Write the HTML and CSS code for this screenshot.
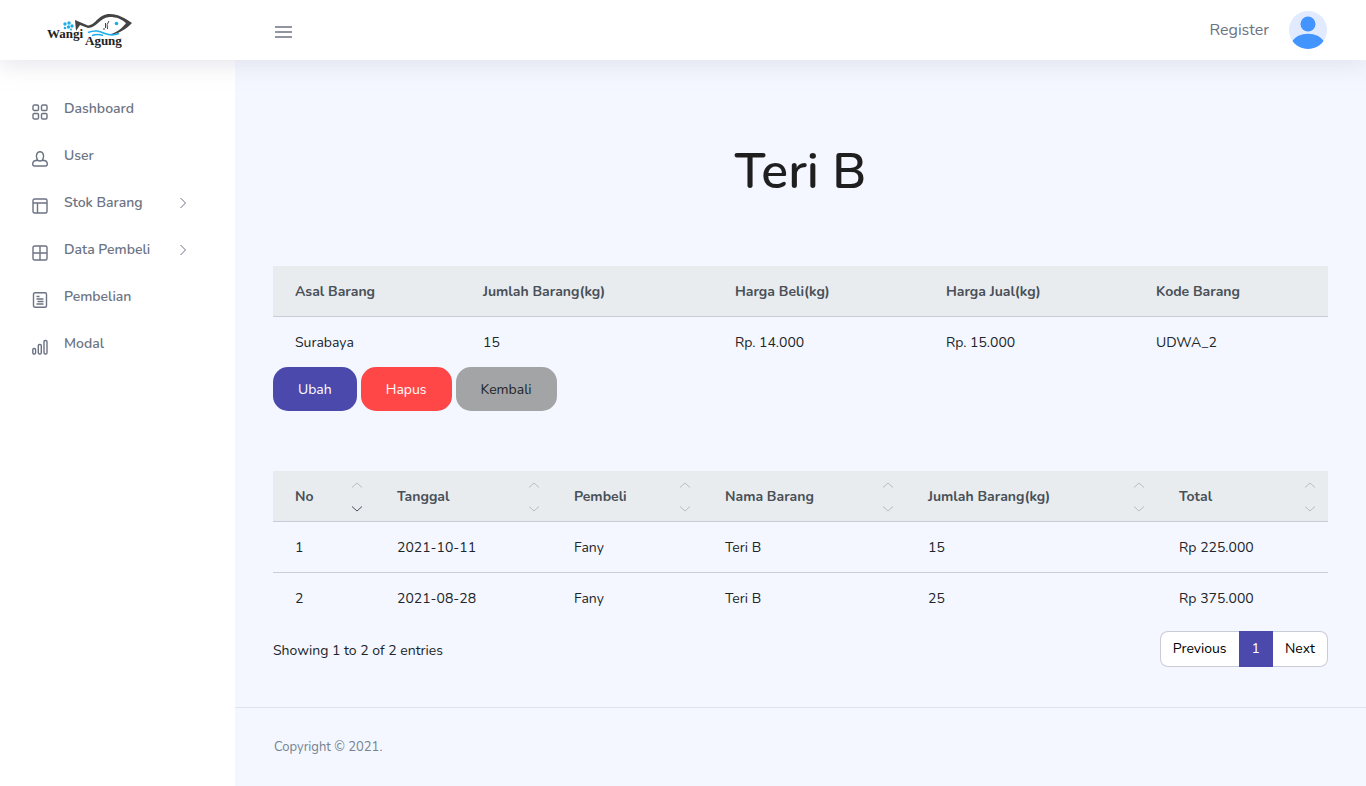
FILE: index.html
```html
<!DOCTYPE html>
<html lang="id">
<head>
<meta charset="utf-8">
<meta name="viewport" content="width=device-width, initial-scale=1">
<title>Teri B - Wangi Agung</title>
<link rel="stylesheet" href="styles.css">
</head>
<body>
<svg class="sprite" aria-hidden="true">
  <symbol id="sort-up" viewBox="0 0 12 6"><path d="M1 5.500 6 1l5 4.500"/></symbol>
  <symbol id="sort-down" viewBox="0 0 12 6"><path d="M1 .5 6 5l5-4.500"/></symbol>
  <symbol id="chevron" viewBox="0 0 8 12"><path d="m1.500 1 5 5-5 5"/></symbol>
</svg>
<header class="navbar">
  <a class="brand" href="#" aria-label="Wangi Agung">
    <svg class="logo" viewBox="0 0 86 36">
      <path class="fish" d="M28 8 41 13.500C49 13 51 2 63 2c8 0 15 4 22 9-6 6-12 10-21 12l-1-.8c7-2 12-6 16-11C75 7 69 5 63 5 53 5 50 16 41 16l-8-3-4 6z"/>
      <path class="fin" d="M62 9q-3 3-1.500 8M58.500 11v5m-2.500 1h2"/>
      <circle class="aqua" cx="69.500" cy="11.500" r="1.800"/>
      <path class="wave" d="M41 20.500c8-3 12-1 17 1s9 2 14 0M45 23.500q6-2 11 0"/>
      <g class="aqua"><circle cx="18" cy="12" r="1.700"/><circle cx="22" cy="11" r="1.700"/><circle cx="25" cy="14" r="1.700"/><circle cx="18" cy="16" r="1.300"/><circle cx="21.500" cy="15" r="1.700"/><circle cx="24" cy="17.500" r="1"/></g>
      <text x="0" y="26">Wangi</text>
      <text x="38" y="33">Agung</text>
    </svg>
  </a>
  <button class="toggle" type="button" aria-label="Menu"><svg viewBox="0 0 18 14"><path d="M1 2h17M1 7h17M1 12h17"/></svg></button>
  <nav class="account">
    <a class="register" href="#">Register</a>
    <a class="profile" href="#" aria-label="Profil">
      <svg viewBox="0 0 38 38"><defs><clipPath id="round"><circle cx="19" cy="19" r="19"/></clipPath></defs><g clip-path="url(#round)"><path fill="#e1eaff" d="M0 0h38v38H0z"/><circle cx="19" cy="13" r="7.500" fill="#4294ff"/><path d="M3 31c5-11 27-11 32 0l-4 7H7z" fill="#4294ff"/></g></svg>
    </a>
  </nav>
</header>
<div class="layout">
  <nav class="sidebar">
    <a class="item" href="#"><svg class="icon" viewBox="0 0 16 16"><rect x="1" y="1" width="5.500" height="5.500" rx="1.300"/><rect x="9.500" y="1" width="5.500" height="5.500" rx="1.300"/><rect x="1" y="9.500" width="5.500" height="5.500" rx="1.300"/><rect x="9.500" y="9.500" width="5.500" height="5.500" rx="1.300"/></svg><span>Dashboard</span></a>
    <a class="item" href="#"><svg class="icon" viewBox="0 0 16 16"><path d="M5.800 9.300C3.500 6 4.200.8 8 .8s4.500 5.200 2.200 8.500M5.800 9.300C3 9.300.7 10.500.7 13c0 1.500.5 2 1.800 2h11c1.300 0 1.800-.5 1.800-2 0-2.500-2.300-3.700-5.100-3.700-1 .9-3.400.9-4.400 0z"/></svg><span>User</span></a>
    <a class="item" href="#"><svg class="icon" viewBox="0 0 16 16"><rect x="1" y="1" width="14" height="14" rx="1.500"/><path d="M1 5h14M5.500 5v10"/></svg><span>Stok Barang</span><svg class="chevron"><use href="#chevron"/></svg></a>
    <a class="item" href="#"><svg class="icon" viewBox="0 0 16 16"><rect x="1" y="1" width="14" height="14" rx="1.500"/><path d="M8 1v14M1 8h14"/></svg><span>Data Pembeli</span><svg class="chevron"><use href="#chevron"/></svg></a>
    <a class="item" href="#"><svg class="icon" viewBox="0 0 16 16"><rect x="1.500" y=".7" width="13" height="14.600" rx="1.500"/><path d="M4.500 4.500h3M4.500 7h7M5.500 9.500h6M4.500 12h7"/></svg><span>Pembelian</span></a>
    <a class="item" href="#"><svg class="icon" viewBox="0 0 16 16"><rect x=".8" y="9.500" width="2.800" height="5.500" rx="1.200"/><rect x="6.300" y="5.500" width="3" height="9.500" rx="1.200"/><rect x="12" y="1.500" width="3" height="13.500" rx="1.200"/></svg><span>Modal</span></a>
  </nav>
  <div class="page">
    <main class="content">
      <h1>Teri B</h1>
      <table class="table">
        <colgroup><col class="w188"><col class="w252"><col class="w211"><col class="w210"><col class="w194"></colgroup>
        <thead><tr><th>Asal Barang</th><th>Jumlah Barang(kg)</th><th>Harga Beli(kg)</th><th>Harga Jual(kg)</th><th>Kode Barang</th></tr></thead>
        <tbody><tr><td>Surabaya</td><td>15</td><td>Rp. 14.000</td><td>Rp. 15.000</td><td>UDWA_2</td></tr></tbody>
      </table>
      <div class="actions">
        <button class="btn edit" type="button">Ubah</button>
        <button class="btn delete" type="button">Hapus</button>
        <button class="btn back" type="button">Kembali</button>
      </div>
      <table class="table sortable">
        <colgroup><col class="w102"><col class="w177"><col class="w151"><col class="w203"><col class="w251"><col class="w171"></colgroup>
        <thead><tr>
          <th class="sorted"><div class="head">No<span class="sort"><svg><use href="#sort-up"/></svg><svg class="down"><use href="#sort-down"/></svg></span></div></th>
          <th><div class="head">Tanggal<span class="sort"><svg><use href="#sort-up"/></svg><svg><use href="#sort-down"/></svg></span></div></th>
          <th><div class="head">Pembeli<span class="sort"><svg><use href="#sort-up"/></svg><svg><use href="#sort-down"/></svg></span></div></th>
          <th><div class="head">Nama Barang<span class="sort"><svg><use href="#sort-up"/></svg><svg><use href="#sort-down"/></svg></span></div></th>
          <th><div class="head">Jumlah Barang(kg)<span class="sort"><svg><use href="#sort-up"/></svg><svg><use href="#sort-down"/></svg></span></div></th>
          <th><div class="head">Total<span class="sort"><svg><use href="#sort-up"/></svg><svg><use href="#sort-down"/></svg></span></div></th>
        </tr></thead>
        <tbody>
          <tr><td>1</td><td>2021-10-11</td><td>Fany</td><td>Teri B</td><td>15</td><td>Rp 225.000</td></tr>
          <tr><td>2</td><td>2021-08-28</td><td>Fany</td><td>Teri B</td><td>25</td><td>Rp 375.000</td></tr>
        </tbody>
      </table>
      <div class="table-foot">
        <p>Showing 1 to 2 of 2 entries</p>
        <nav class="pagination" aria-label="Halaman"><a class="prev" href="#">Previous</a><a class="current" href="#" aria-current="page">1</a><a class="next" href="#">Next</a></nav>
      </div>
    </main>
    <footer class="footer">Copyright © 2021.</footer>
  </div>
</div>
</body>
</html>
```
FILE: styles.css
```css
* { box-sizing: border-box; }
body {
  margin: 0;
  min-height: 100vh;
  display: flex;
  flex-direction: column;
  font: 14px/20px Nunito, Lato, sans-serif;
  color: #212529;
  background: #f4f7ff;
}
a { color: inherit; text-decoration: none; }
button { font: inherit; cursor: pointer; }
svg { fill: none; stroke: currentColor; flex: none; }
.sprite { display: none; }

.navbar {
  position: sticky;
  top: 0;
  z-index: 1;
  height: 60px;
  display: flex;
  align-items: center;
  padding-right: 39px;
  background: #fff;
  color: #6c7383;
  box-shadow: 0 5px 21px 0 #cdcddd80;
}
.brand { width: 235px; padding-left: 47px; }
.logo { display: block; width: 86px; height: 36px; stroke: none; }
.logo text { font: bold 13px "Liberation Serif", serif; fill: #222; }
.fish { fill: #444; }
.fin { stroke: #444; }
.aqua { fill: #1daeea; }
.wave { stroke: #1daeea; stroke-width: 1.6; }
.toggle { margin-left: 39px; padding: 4px 0 0; border: 0; background: none; color: inherit; }
.toggle svg { display: block; width: 18px; height: 14px; stroke-width: 1.7; }
.account { display: flex; align-items: center; gap: 20px; margin-left: auto; }
.register { font-size: 16px; }
.profile svg { display: block; width: 38px; height: 38px; stroke: none; }

.layout { display: flex; flex: 1; }
.sidebar { width: 235px; flex: none; padding: 25px 32px; background: #fff; color: #6c7383; font-weight: 600; }
.item { display: flex; align-items: center; height: 47px; }
.icon { width: 16px; height: 16px; margin: 6px 16px 0 0; stroke-width: 1.4; }
.chevron { width: 8px; height: 12px; margin: 0 16px 0 auto; }

.page { flex: 1; min-width: 0; display: flex; flex-direction: column; }
.content { flex: 1; padding: 82px 38px 40px; }
h1 { margin: 0 0 64px; font-size: 50px; line-height: 60px; font-weight: 600; text-align: center; color: #1f1f1f; }

.table { width: 100%; table-layout: fixed; border-collapse: separate; border-spacing: 0; }
th, td { padding: 16px 22px 14px; text-align: left; white-space: nowrap; }
th { background: #e8ecef; color: #495057; font-weight: 700; border-bottom: 1px solid #c9ccd7; }
tbody tr:not(:last-child) td { border-bottom: 1px solid #c9ccd7; }
.w188 { width: 188px; } .w252 { width: 252px; } .w211 { width: 211px; } .w210 { width: 210px; } .w194 { width: 194px; }
.w102 { width: 102px; } .w177 { width: 177px; } .w151 { width: 151px; } .w203 { width: 203px; } .w251 { width: 251px; } .w171 { width: 171px; }

.actions { display: flex; gap: 4px; margin-bottom: 60px; }
.btn { height: 44px; padding: 2px 24px 0; border: 1px solid transparent; border-radius: 15px; }
.edit { background: #4b49ac; color: #fff; }
.delete { background: #ff4747; color: #fff; }
.back { background: #a3a4a5; color: #212529; }

.sortable th { padding: 11px 12px 9px 22px; }
.head { display: flex; align-items: center; justify-content: space-between; height: 30px; }
.sort { display: flex; flex-direction: column; gap: 18px; color: #b9bdc1; }
.sort svg { width: 12px; height: 6px; }
.sort .down { color: #495057; }

.table-foot { display: flex; justify-content: space-between; align-items: center; padding-top: 8px; }
.table-foot p { margin: 4px 0 0; }
.pagination { display: flex; height: 36px; line-height: 34px; text-align: center; color: #000; }
.pagination a { padding: 0 12px; border: 1px solid #c9ccd7; background: #fff; }
.pagination .prev { border-right: 0; border-radius: 8px 0 0 8px; }
.pagination .next { border-left: 0; border-radius: 0 8px 8px 0; }
.pagination .current { background: #4b49ac; border-color: #4b49ac; color: #fff; }

.footer { padding: 29px 39px; border-top: 1px solid #dfe3ec; font-size: 13px; color: #76838f; }
```
